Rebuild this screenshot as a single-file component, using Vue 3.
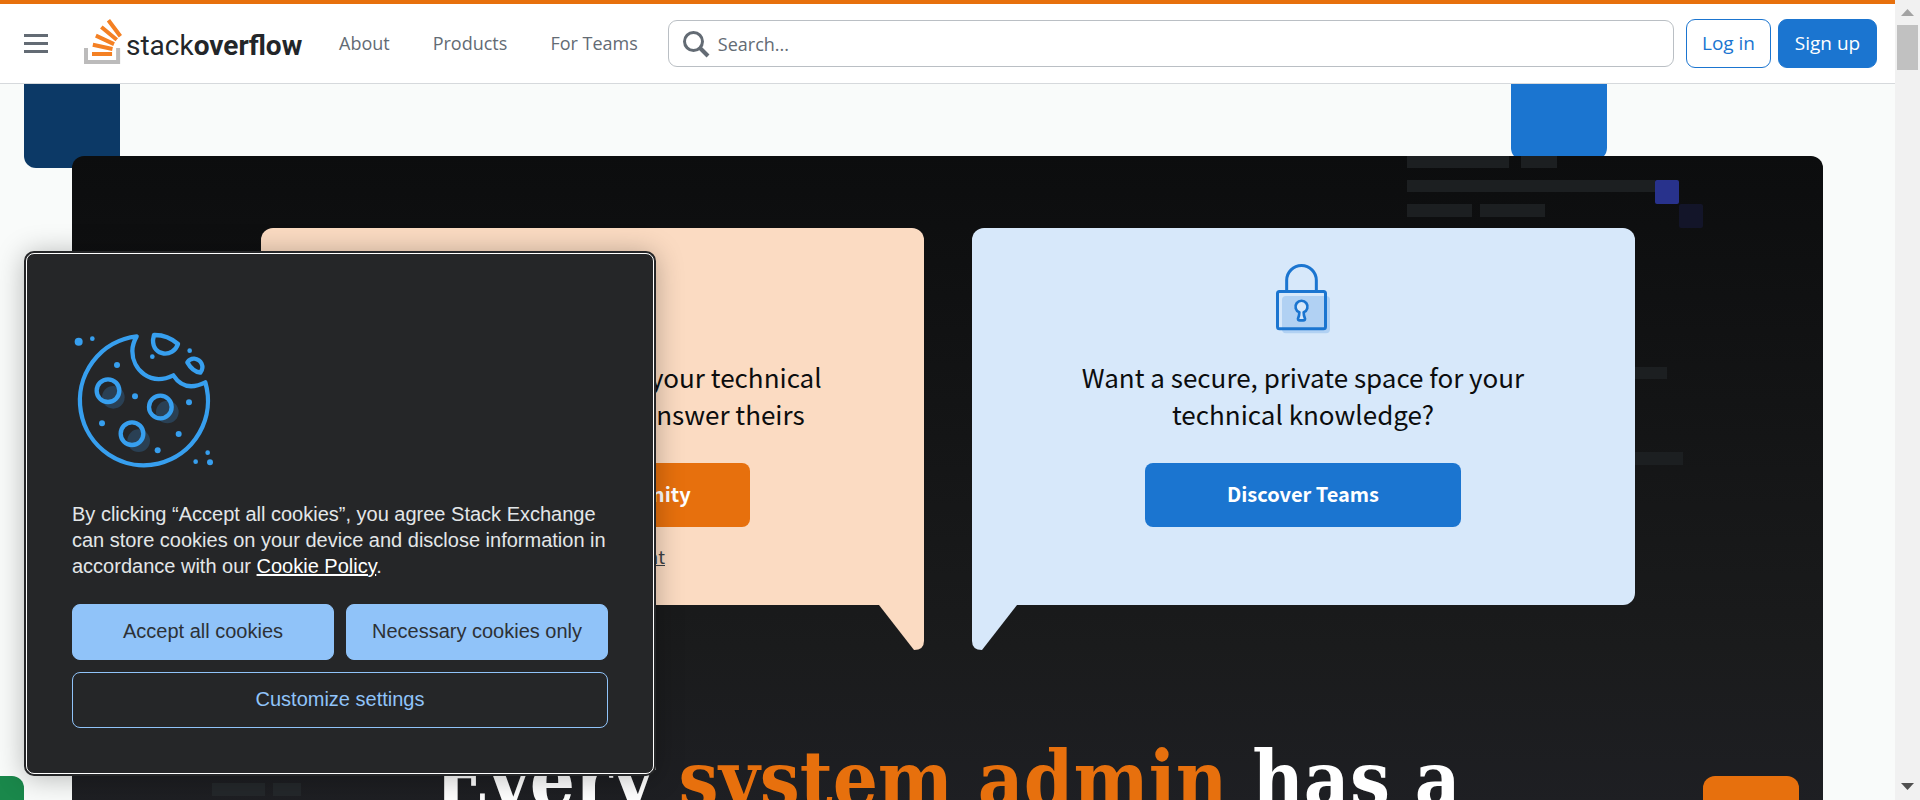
<script setup>
const links = ['About', 'Products', 'For Teams']
</script>

<template>
  <div class="window">
    <div class="page">
      <header class="topbar">
        <button class="menu" type="button" aria-label="Menu"><i></i><i></i><i></i></button>
        <a class="logo" href="#">
          <svg width="38" height="45" viewBox="22.6 14.9 73.1 86.6" aria-hidden="true">
            <path fill="#bcbbbb" d="M84.4 93.8V70.6h7.7v30.9H22.6V70.6h7.7v23.2z" />
            <path fill="#f48023" d="M38.8 68.4l37.8 7.9 1.6-7.6-37.8-7.9zM43.8 50.4l35 16.3 3.2-7-35-16.4zM53.5 33.2l29.7 24.7 4.9-5.9-29.7-24.7zM72.7 14.9l-6.2 4.6 23 31 6.2-4.6zM38 86h38.6v-7.7H38z" />
          </svg>
          <span class="wordmark">stack<b>overflow</b></span>
        </a>
        <nav>
          <a v-for="l in links" :key="l" href="#">{{ l }}</a>
        </nav>
        <form class="search" role="search" @submit.prevent>
          <svg width="28" height="28" viewBox="0 0 28 28" fill="none" stroke="#636b74" aria-hidden="true">
            <circle cx="11.5" cy="11.5" r="9" stroke-width="3" />
            <path d="M18 18l8 8" stroke-width="4" />
          </svg>
          <input type="text" aria-label="Search" placeholder="Search..." />
        </form>
        <div class="account">
          <a class="login" href="#">Log in</a>
          <a class="signup" href="#">Sign up</a>
        </div>
      </header>

      <main>
        <span class="block navy"></span>
        <span class="block blue"></span>
        <section class="hero">
          <div class="art" aria-hidden="true">
            <svg class="code" width="296" height="309" viewBox="0 0 296 309" fill="#1c1f21">
              <path d="M0 0h102v12H0zM114 0h36v12h-36zM0 24h248v12H0zM0 48h65v13H0zM73 48h65v13H73zM200 211h60v12h-60zM200 296h76v13h-76z" />
              <rect x="248" y="24" width="24" height="24" rx="2" fill="#28328c" />
              <rect x="272" y="48" width="24" height="24" rx="2" fill="#131529" />
            </svg>
            <svg class="dashes" width="89" height="13" viewBox="0 0 89 13" fill="#24282b">
              <path d="M0 0h53v13H0zM61 0h28v13H61z" />
            </svg>
            <span class="block green"></span>
            <span class="block orange"></span>
          </div>
          <div class="cards">
            <article class="card community">
              <svg class="icon" width="60" height="73" viewBox="0 0 60 73" fill="none" stroke="#e7700d" stroke-width="3" aria-hidden="true">
                <path d="M8 20h36v26H26L16 56V46H8z" />
              </svg>
              <p>Find the best answer to your technical question, help others answer theirs</p>
              <a class="cta" href="#">Join the community</a>
              <div class="alt">or <a href="#">search content</a></div>
              <svg class="tail" width="45" height="46" viewBox="0 0 45 46" aria-hidden="true">
                <path fill="#fbdbc2" d="M0 0V1L35 46q10 0 10-9V0z" />
              </svg>
            </article>
            <article class="card teams">
              <svg class="icon" width="60" height="73" viewBox="69 39 180 219" fill="none" aria-hidden="true">
                <rect x="96" y="141" width="144" height="112" rx="12" fill="#b1d1f3" />
                <path d="M110 127V94a44.500 44.500 0 0 1 89 0v33" stroke="#1b75d0" stroke-width="9" />
                <rect x="82.500" y="127.500" width="144" height="112" rx="6" stroke="#1b75d0" stroke-width="9" />
                <path d="M148 190a18 18 0 1 1 13 0q0 11 4 19q0 5-5 5h-11q-5 0-5-5q4-8 4-19z" fill="#d7e8fa" stroke="#1b75d0" stroke-width="8" stroke-linejoin="round" />
              </svg>
              <p>Want a secure, private space for your technical knowledge?</p>
              <a class="cta" href="#">Discover Teams</a>
              <svg class="tail" width="45" height="46" viewBox="0 0 45 46" aria-hidden="true">
                <path fill="#d7e8fa" d="M45 0V1L10 46Q0 46 0 37V0z" />
              </svg>
            </article>
          </div>
          <h1>Every <em>system admin</em> has a</h1>
        </section>
      </main>

      <section class="consent" role="dialog" aria-label="Cookie consent">
        <div class="consent-body">
          <svg class="cookie" width="144" height="144" viewBox="216 264 432 432" fill="none" stroke="#379fef" stroke-width="13" stroke-linejoin="round" aria-hidden="true">
            <g fill="#2a4054" stroke="none">
              <circle cx="340" cy="472" r="34" /><circle cx="502" cy="516" r="34" /><circle cx="416" cy="602" r="34" />
            </g>
            <path d="M410 289A192 194 0 1 0 616 427Q554 458 520 406C450 440 397 388 397 333Q397 312 410 289z" />
            <path d="M462 285Q502 284 534 312C520 354 458 350 459 300z" />
            <path d="M562 367Q570 355 583 356C603 358 615 380 601 398Q577 394 562 367z" />
            <circle cx="324" cy="452" r="34" /><circle cx="481" cy="501" r="34" /><circle cx="396" cy="581" r="34" />
            <g fill="#379fef" stroke="none">
              <circle cx="236" cy="305" r="12" /><circle cx="277" cy="296" r="7" />
              <circle cx="351" cy="375" r="9" /><circle cx="457" cy="350" r="7" /><circle cx="569" cy="332" r="7" />
              <circle cx="405" cy="469" r="9" /><circle cx="567" cy="487" r="9" /><circle cx="306" cy="550" r="9" />
              <circle cx="536" cy="582" r="9" /><circle cx="473" cy="631" r="9" />
              <circle cx="623" cy="638" r="7" /><circle cx="587" cy="665" r="7" /><circle cx="630" cy="667" r="9" />
            </g>
          </svg>
          <p>By clicking “Accept all cookies”, you agree Stack Exchange can store cookies on your device and disclose information in accordance with our <a href="#">Cookie Policy</a>.</p>
          <div class="actions">
            <button type="button">Accept all cookies</button>
            <button type="button">Necessary cookies only</button>
            <button class="outline" type="button">Customize settings</button>
          </div>
        </div>
      </section>
    </div>
    <div class="scrollbar" aria-hidden="true">
      <svg width="13" height="7" viewBox="0 0 13 7"><path fill="#a3a3a3" d="M0 7L6.500 0 13 7z" /></svg>
      <span class="thumb"></span>
      <svg class="down" width="13" height="7" viewBox="0 0 13 7"><path fill="#505050" d="M0 0h13L6.500 7z" /></svg>
    </div>
  </div>
</template>

<style>
body { margin: 0; }
</style>

<style scoped>
* { box-sizing: border-box; }
.window {
  display: flex;
  height: 100vh;
  overflow: hidden;
  font-family: "Open Sans", "Noto Sans", sans-serif;
  background: #f9fbfa;
}
.page {
  position: relative;
  flex: 1;
  min-width: 0;
  display: flex;
  flex-direction: column;
}
.topbar {
  flex: none;
  display: flex;
  align-items: center;
  height: 84px;
  padding: 0 18px 0 24px;
  border-top: 4px solid #e7700d;
  border-bottom: 1px solid #d6d9dc;
  background: #fff;
  font-size: 18px;
}
.menu {
  display: grid;
  gap: 5px;
  width: 24px;
  padding: 0;
  border: 0;
  background: none;
}
.menu i { height: 3px; background: #636b74; }
.logo {
  display: flex;
  align-items: flex-end;
  gap: 4px;
  width: 219px;
  margin-left: 36px;
  padding-bottom: 5px;
  color: #232629;
  text-decoration: none;
}
.logo svg { flex: none; }
.wordmark {
  font-family: Roboto, sans-serif;
  font-size: 28px;
  line-height: 36px;
}
nav { display: flex; gap: 43px; margin-left: 36px; padding-bottom: 2px; }
nav a { color: #636b74; text-decoration: none; white-space: nowrap; }
.search {
  flex: 1;
  display: flex;
  align-items: center;
  gap: 8px;
  height: 47px;
  margin: 0 12px 0 30px;
  padding: 0 12px 0 13px;
  border: 1px solid #babfc4;
  border-radius: 9px;
}
.search input {
  flex: 1;
  min-width: 0;
  padding: 0;
  border: 0;
  outline: 0;
  background: none;
  font: inherit;
  color: #636b74;
}
.search input::placeholder { color: #636b74; opacity: 1; }
.account { display: flex; gap: 7px; font-size: 19px; }
.account a {
  height: 49px;
  border: 1px solid #1b75d0;
  border-radius: 9px;
  line-height: 47px;
  text-align: center;
  text-decoration: none;
  white-space: nowrap;
}
.login { width: 85px; color: #1b75d0; }
.signup { width: 99px; background: #1b75d0; color: #fff; }
main {
  position: relative;
  flex: 1;
  min-height: 0;
  overflow: hidden;
  padding: 72px 72px 0;
}
.block { position: absolute; width: 96px; height: 96px; border-radius: 12px; }
.navy { top: -12px; left: 24px; background: #0c3966; }
.blue { top: -20px; right: 288px; background: #1b75d0; }
.green { top: 620px; left: -144px; background: #1a884b; }
.orange { top: 620px; right: 24px; background: #e7700d; }
.hero {
  position: relative;
  min-height: 100%;
  padding: 72px 24px 0;
  border-radius: 12px 12px 0 0;
  background: linear-gradient(#0c0d0e, #1a1b1c 490px, #1e1f23 650px);
}
.code { position: absolute; top: 0; right: 120px; }
.dashes { position: absolute; top: 627px; left: 140px; }
.cards {
  position: relative;
  display: grid;
  grid-template-columns: 1fr 1fr;
  gap: 48px;
  max-width: 1374px;
  margin: 0 auto;
  font-family: "Noto Sans CJK SC", sans-serif;
}
.card {
  position: relative;
  display: flex;
  flex-direction: column;
  align-items: center;
  padding: 34px 80px;
  border-radius: 12px;
  color: #0c0d0e;
  text-align: center;
}
.community { background: #fbdbc2; border-bottom-right-radius: 0; }
.teams { background: #d7e8fa; border-bottom-left-radius: 0; }
.card p {
  max-width: 460px;
  margin: 23px 0 31px;
  font-size: 26px;
  line-height: 37px;
}
.cta {
  width: 316px;
  padding-bottom: 2px;
  border-radius: 8px;
  color: #fff;
  font-size: 20px;
  font-weight: 700;
  line-height: 62px;
  text-decoration: none;
}
.community .cta { background: #e7700d; }
.teams .cta { background: #1b75d0; }
.alt { margin-top: 14px; font-size: 18px; line-height: 30px; color: #3b4045; }
.alt a { color: inherit; }
.tail { position: absolute; top: calc(100% - 1px); }
.community .tail { right: 0; }
.teams .tail { left: 0; }
h1 {
  position: relative;
  margin: 125px 0 0;
  color: #fff;
  font-family: "DejaVu Serif Condensed", "DejaVu Serif", serif;
  font-size: 79px;
  font-weight: 700;
  line-height: 100px;
  text-align: center;
  white-space: nowrap;
}
h1 em { color: #e7700d; font-style: normal; }
.consent {
  position: absolute;
  left: 24px;
  bottom: 24px;
  width: 632px;
  padding: 2px;
  border-radius: 10px;
  background: #252628;
  box-shadow: 0 2px 28px rgba(0, 0, 0, 0.28);
  font-family: "Liberation Sans", Arial, sans-serif;
  font-size: 20px;
}
.consent-body {
  padding: 74px 45px 45px;
  border: 1px solid #fff;
  border-radius: 8px;
}
.cookie { display: block; }
.consent p { margin: 29px 0 25px; line-height: 26px; color: #e3e6e8; }
.consent p a { color: #fff; }
.actions { display: grid; grid-template-columns: 1fr 1fr; gap: 12px; }
.actions button {
  height: 56px;
  padding: 0 0 2px;
  border: 1px solid #90c3f9;
  border-radius: 8px;
  background: #90c3f9;
  color: #2d3136;
  font: inherit;
}
.actions .outline { grid-column: 1 / -1; background: none; color: #90c3f9; }
.scrollbar {
  flex: none;
  display: flex;
  flex-direction: column;
  align-items: center;
  width: 25px;
  padding: 9px 0 10px;
  background: #f1f1f1;
}
.thumb { width: 21px; height: 45px; margin-top: 9px; background: #c1c1c1; }
.down { margin-top: auto; }
</style>
